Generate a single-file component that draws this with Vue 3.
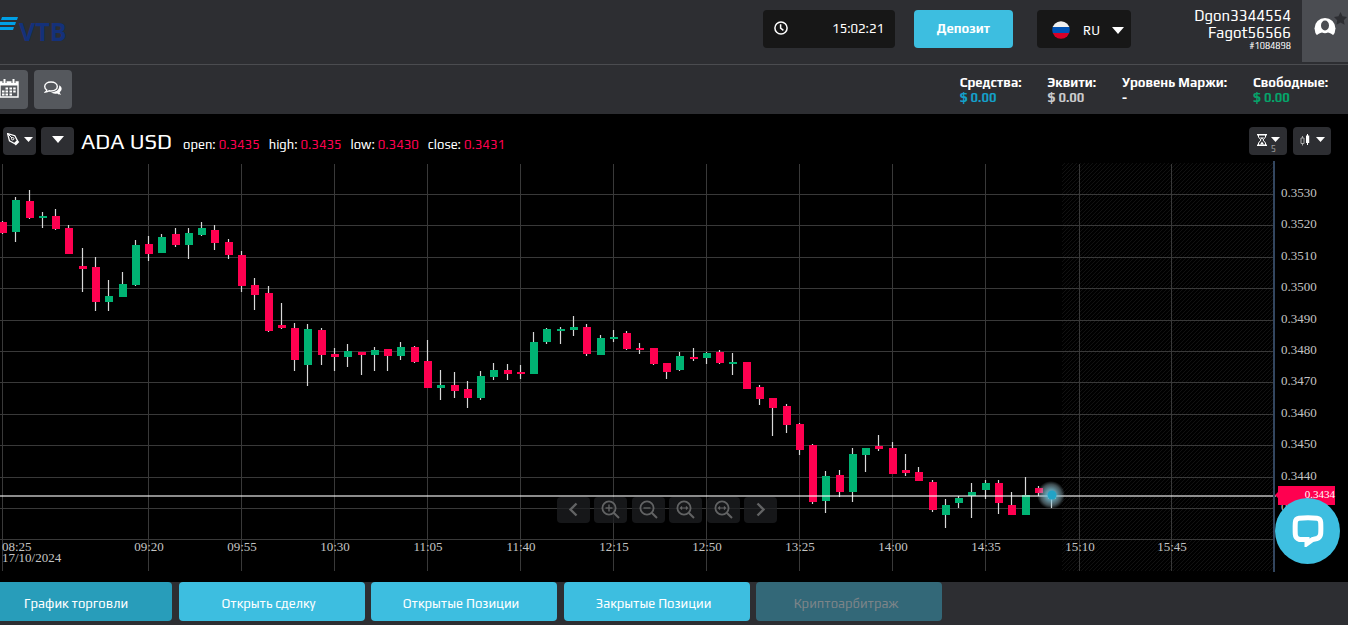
<script setup>
import { ref } from 'vue'

const language = ref('RU')

const stats = [
  { label: 'Средства:', value: '$ 0.00', tone: 'blue' },
  { label: 'Эквити:', value: '$ 0.00', tone: 'grey' },
  { label: 'Уровень Маржи:', value: '-', tone: 'white' },
  { label: 'Свободные:', value: '$ 0.00', tone: 'green' },
]

const quotes = [
  { label: 'open:', value: '0.3435' },
  { label: 'high:', value: '0.3435' },
  { label: 'low:', value: '0.3430' },
  { label: 'close:', value: '0.3431' },
]

const tabs = [
  { label: 'График торговли', active: true },
  { label: 'Открыть сделку' },
  { label: 'Открытые Позиции' },
  { label: 'Закрытые Позиции' },
  { label: 'Криптоарбитраж', disabled: true },
]

const zoomTools = ['prev', 'in', 'out', 'fit', 'reset', 'next']
const zoomLabels = {
  prev: 'Назад', in: 'Увеличить', out: 'Уменьшить', fit: 'По ширине', reset: 'Сбросить', next: 'Вперёд',
}

const times = [
  ['09:20', 149], ['09:55', 242], ['10:30', 335], ['11:05', 428], ['11:40', 521], ['12:15', 614],
  ['12:50', 707], ['13:25', 800], ['14:00', 893], ['14:35', 986], ['15:10', 1080], ['15:45', 1172],
]

const prices = [
  ['0.3530', 194], ['0.3520', 225], ['0.3510', 257], ['0.3500', 288], ['0.3490', 320], ['0.3480', 351],
  ['0.3470', 382], ['0.3460', 414], ['0.3450', 445], ['0.3440', 477], ['0.3430', 508],
]

// [rising, body top, body bottom, wick top, wick bottom], one entry per five minutes
const raw = [
  [0, 222, 233, 221, 234], [1, 200, 232, 197, 242], [0, 201, 218, 190, 219], [1, 216, 218, 212, 228],
  [0, 216, 229, 209, 230], [0, 228, 254, 225, 254], [0, 266, 269, 248, 292], [0, 267, 302, 257, 311],
  [1, 296, 302, 280, 311], [1, 284, 297, 272, 297], [1, 245, 285, 240, 286], [0, 244, 254, 236, 261],
  [1, 237, 253, 234, 253], [0, 234, 245, 228, 247], [1, 233, 245, 228, 259], [1, 228, 235, 222, 236],
  [0, 230, 243, 225, 250], [0, 242, 255, 239, 259], [0, 255, 286, 251, 292], [0, 285, 295, 278, 310],
  [0, 293, 331, 286, 332], [0, 325, 328, 303, 329], [0, 328, 360, 323, 371], [1, 329, 365, 324, 386],
  [0, 330, 355, 328, 365], [0, 354, 357, 348, 371], [1, 351, 357, 344, 367], [0, 352, 355, 352, 375],
  [1, 350, 355, 347, 371], [0, 349, 356, 349, 371], [1, 347, 356, 342, 360], [0, 347, 362, 346, 363],
  [0, 361, 388, 340, 388], [1, 385, 388, 370, 400], [0, 385, 391, 372, 398], [0, 389, 398, 381, 408],
  [1, 376, 398, 371, 400], [1, 370, 377, 363, 380], [0, 370, 374, 364, 380], [0, 372, 374, 365, 379],
  [1, 342, 374, 332, 374], [1, 329, 342, 328, 344], [1, 329, 331, 327, 344], [1, 327, 330, 316, 336],
  [0, 327, 354, 324, 356], [1, 338, 355, 335, 355], [1, 337, 339, 330, 342], [0, 333, 349, 331, 350],
  [0, 348, 350, 343, 354], [0, 348, 364, 348, 365], [0, 363, 372, 363, 379], [1, 356, 370, 352, 371],
  [0, 357, 359, 348, 361], [1, 353, 358, 352, 364], [0, 352, 363, 350, 364], [1, 362, 364, 353, 375],
  [0, 362, 389, 362, 389], [0, 387, 399, 385, 405], [0, 398, 408, 398, 436], [0, 406, 425, 404, 433],
  [0, 424, 450, 423, 455], [0, 445, 502, 444, 504], [1, 476, 501, 471, 513], [0, 475, 492, 470, 497],
  [1, 454, 492, 448, 502], [1, 448, 455, 448, 472], [0, 446, 449, 435, 451], [0, 448, 474, 442, 474],
  [0, 470, 473, 454, 476], [0, 472, 481, 467, 481], [0, 482, 510, 480, 512], [1, 505, 515, 499, 528],
  [1, 498, 503, 496, 508], [1, 492, 496, 483, 518], [1, 483, 490, 480, 499], [0, 483, 503, 480, 514],
  [0, 505, 515, 492, 515], [1, 495, 515, 477, 515], [0, 488, 493, 486, 496], [1, 493, 499, 491, 508],
]
const step = 13.28
const candles = raw.map(([up, top, bottom, high, low], i) => ({
  x: Math.round(3 + i * step), up: !!up, top, bottom, high, low,
}))
</script>

<template>
  <div class="page">
    <header class="topbar">
      <a class="logo" href="#" aria-label="VTB">
        <svg class="logo-mark" width="22" height="14" viewBox="0 0 22 14">
          <path d="M6 0h16l-1 3H5zM4 5h16l-1 3H3zM2 10h16l-1 3H1z" fill="#00a0e6" />
        </svg>
        <span class="logo-text">VTB</span>
      </a>
      <div class="clock">
        <svg width="14" height="14" viewBox="0 0 14 14" fill="none" stroke="#fff" stroke-width="1.5">
          <circle cx="7" cy="7" r="6.1" />
          <path d="M6.6 3.2v4l2.8 2.2" />
        </svg>
        <time>15:02:21</time>
      </div>
      <button class="deposit" type="button">Депозит</button>
      <label class="language">
        <svg width="18" height="18" viewBox="0 0 18 18">
          <clipPath id="flag"><circle cx="9" cy="9" r="8.8" /></clipPath>
          <g clip-path="url(#flag)">
            <path d="M0 0h18v6H0z" fill="#f0f0f0" />
            <path d="M0 6h18v6H0z" fill="#0052b4" />
            <path d="M0 12h18v6H0z" fill="#d80027" />
          </g>
        </svg>
        <select v-model="language" aria-label="Язык">
          <option>RU</option>
        </select>
        <svg width="12" height="7" viewBox="0 0 12 7"><path d="M0 0h12L6 7z" fill="#fff" /></svg>
      </label>
      <div class="user">
        <span>Dgon3344554</span>
        <span>Fagot56566</span>
        <small>#1084898</small>
      </div>
      <button class="avatar" type="button" aria-label="Профиль">
        <svg width="36" height="28" viewBox="0 0 36 28">
          <circle cx="13" cy="19.500" r="10.500" fill="#fff" />
          <ellipse cx="13" cy="16.500" rx="4" ry="5" fill="#4b4d52" />
          <path d="M4 30v-3c1.500-2 4-3 6-3.500q3 1.500 6 0c2 .5 4.500 1.500 6 3.500v3z" fill="#4b4d52" />
          <path d="M28.500 3l2 4.200 4.500.7-3.200 3.300.8 4.600-4.100-2.200-4.100 2.200.8-4.600L22 7.900l4.500-.7z" fill="#2d2e32" />
        </svg>
      </button>
    </header>

    <section class="toolbar">
      <button class="tool" type="button" aria-label="Календарь">
        <svg width="20" height="19" viewBox="0 0 20 19">
          <path d="M1 3h18v15H1z" fill="none" stroke="#fff" stroke-width="1.400" />
          <path d="M1 3h18v3.500H1z" fill="#fff" />
          <path d="M5.500 0v4M14.500 0v4" stroke="#55585d" stroke-width="4" />
          <path d="M5.500 0v4M14.500 0v4" stroke="#fff" stroke-width="2" />
          <path d="M6.500 8.500h2.500v2h-2.500zM10.500 8.500h2.500v2h-2.500zM14.200 8.500h2.500v2h-2.500zM3 11.500h2.500v2H3zM6.500 11.500h2.500v2h-2.500zM10.500 11.500h2.500v2h-2.500zM14.200 11.500h2.500v2h-2.500zM3 14.500h2.500v2H3zM6.500 14.500h2.500v2h-2.500zM10.500 14.500h2.500v2h-2.500z" fill="#fff" />
        </svg>
      </button>
      <button class="tool" type="button" aria-label="Чат">
        <svg width="18" height="15" viewBox="0 0 18 15">
          <path d="M15.200 4.200c2.800 1.600 3.500 4.600.5 7 0 1 .8 1.800 1.500 2.500-1.700.1-3-.4-4-1.200-2.600.5-4.900 0-6.200-1.200 5 0 8.700-2.500 8.200-7.100z" fill="#fff" />
          <path d="M7 1c3.600 0 6.300 1.900 6.300 4.500S10.600 10 7 10c-.7 0-1.300-.1-1.900-.2C4 10.600 2.800 11 1.500 11c.7-.6 1.200-1.200 1.300-2C1.300 8.100.7 6.900.7 5.500.7 2.900 3.400 1 7 1z" fill="#55585d" stroke="#fff" stroke-width="1.400" />
        </svg>
      </button>
      <dl class="stats">
        <div v-for="s in stats" :key="s.label">
          <dt>{{ s.label }}</dt>
          <dd :class="s.tone">{{ s.value }}</dd>
        </div>
      </dl>
    </section>

    <main class="chart">
      <div class="chart-head">
        <div class="chips">
          <button class="chip" type="button" aria-label="Рисование">
            <svg width="13" height="13" viewBox="0 0 13 13" fill="none" stroke="#fff">
              <path d="M.6.6l7.200 2.100 2.600 4.900-3 2.900-4.900-2.600z" stroke-width="1.300" />
              <path d="M.6.6l4.400 4.400" />
              <circle cx="5.700" cy="5.700" r="1.200" />
              <path d="M11.600 8.200l-3.500 3.500" stroke-width="2" />
            </svg>
            <svg width="9" height="5" viewBox="0 0 9 5"><path d="M0 0h9L4.500 5z" fill="#fff" /></svg>
          </button>
          <button class="chip" type="button" aria-label="Выбор инструмента">
            <svg width="12" height="7" viewBox="0 0 12 7"><path d="M0 0h12L6 7z" fill="#fff" /></svg>
          </button>
        </div>
        <h1>ADA USD</h1>
        <p class="quotes">
          <span v-for="q in quotes" :key="q.label">{{ q.label }} <b>{{ q.value }}</b></span>
        </p>
        <div class="chips right">
          <button class="chip" type="button" aria-label="Интервал">
            <svg width="10" height="12" viewBox="0 0 10 12" fill="none" stroke="#fff">
              <path d="M0 .7h10M0 11.300h10" stroke-width="1.400" />
              <path d="M1.500 1v2L4 6 1.500 9v2M8.500 1v2L6 6l2.500 3v2" />
              <path d="M3 3.500h4L5 5.500zM3 10.500L5 7.500l2 3z" fill="#fff" stroke="none" />
            </svg>
            <svg width="9" height="5" viewBox="0 0 9 5"><path d="M0 0h9L4.500 5z" fill="#fff" /></svg>
            <small>5</small>
          </button>
          <button class="chip types" type="button" aria-label="Тип графика">
            <svg width="10" height="12" viewBox="0 0 10 12">
              <path d="M2.500 2v2M2.500 9.500v2" stroke="#aaa" />
              <path d="M1 4h3v5.500H1z" fill="none" stroke="#aaa" />
              <path d="M7.500 0v11" stroke="#fff" />
              <path d="M6 1.500h3.200v7.500H6z" fill="#fff" />
            </svg>
            <svg width="9" height="5" viewBox="0 0 9 5"><path d="M0 0h9L4.500 5z" fill="#fff" /></svg>
          </button>
        </div>
      </div>

      <div class="plot">
        <svg class="plot-svg" viewBox="0 161 1348 411" role="img" aria-label="ADA USD">
          <defs>
            <pattern id="hatch" width="4" height="4" patternUnits="userSpaceOnUse">
              <path d="M-1 5L5-1M-1 1l2-2M3 5l2-2" stroke="#111" stroke-width="1" />
            </pattern>
            <radialGradient id="glow">
              <stop offset="0" stop-color="#5cc6e4" stop-opacity="1" />
              <stop offset=".4" stop-color="#7fc4d8" stop-opacity=".75" />
              <stop offset=".75" stop-color="#9fc4d0" stop-opacity=".4" />
              <stop offset="1" stop-color="#9fc4d0" stop-opacity="0" />
            </radialGradient>
          </defs>
          <rect x="1062" y="163" width="211" height="408" fill="url(#hatch)" />
          <g stroke="#393939">
            <line x1="2.500" x2="2.500" y1="164" y2="571" />
            <line v-for="[t, x] in times" :key="t" :x1="x - 0.5" :x2="x - 0.5" y1="164" y2="571" />
            <line v-for="[p, y] in prices" :key="p" x1="0" x2="1273" :y1="y + 0.5" :y2="y + 0.5" />
            <line x1="0" x2="1273" y1="539.5" y2="539.5" />
          </g>
          <g v-for="c in candles" :key="c.x" :fill="c.up ? '#00b373' : '#ff0050'">
            <line :x1="c.x - 0.5" :x2="c.x - 0.5" :y1="c.high" :y2="c.low" stroke="#d8d8d8" stroke-width="1.200" />
            <rect :x="c.x - 4" :y="c.top" width="8" :height="c.bottom - c.top" />
          </g>
          <rect x="0" y="495" width="1276" height="2" fill="#fff" fill-opacity=".55" />
          <circle cx="1051" cy="495" r="14" fill="url(#glow)" />
          <circle cx="1052" cy="495" r="4.500" fill="#22a3c6" />
          <rect x="1273" y="161" width="2" height="411" fill="#33465f" />
          <g class="axis">
            <text x="2" y="551">08:25</text>
            <text x="2" y="562">17/10/2024</text>
            <text v-for="[t, x] in times" :key="t" :x="x" y="551" text-anchor="middle">{{ t }}</text>
            <text v-for="[p, y] in prices" :key="p" x="1281" :y="y + 3">{{ p }}</text>
          </g>
          <path d="M1275 495l3-3v-6h57v19h-57v-7z" fill="#ff0050" />
          <text class="tag" x="1335" y="498" text-anchor="end">0.3434</text>
        </svg>

        <div class="zoom">
          <button v-for="z in zoomTools" :key="z" type="button" :aria-label="zoomLabels[z]">
            <svg width="19" height="19" viewBox="0 0 19 19" fill="none" stroke="#626364" stroke-width="1.800">
              <path v-if="z === 'prev'" d="M12.500 3.500l-6 6 6 6" stroke-width="2.400" />
              <path v-else-if="z === 'next'" d="M6.500 3.500l6 6-6 6" stroke-width="2.400" />
              <template v-else>
                <circle cx="8" cy="8" r="6.600" />
                <path d="M12.700 12.700L18 18" stroke-width="2" />
                <path v-if="z === 'in'" d="M8 4.500v7M4.500 8h7" stroke-width="1.400" />
                <path v-if="z === 'out'" d="M4.500 8h7" stroke-width="1.400" />
                <path v-if="z === 'fit' || z === 'reset'" d="M4.500 8h7M6 6.500L4.500 8 6 9.500M10 6.500L11.500 8 10 9.500" stroke-width="1.200" />
              </template>
            </svg>
          </button>
        </div>
      </div>
    </main>

    <nav class="tabs">
      <button v-for="t in tabs" :key="t.label" type="button" :class="{ active: t.active }" :disabled="t.disabled">
        {{ t.label }}
      </button>
    </nav>

    <button class="chat" type="button" aria-label="Открыть чат">
      <svg width="32" height="32" viewBox="0 0 32 32">
        <path d="M7 3.300Q16 2.200 25 3.300Q28.500 3.800 28.700 7.500Q29 13.500 28.700 18.500Q28.400 22.500 25 23.500L20.500 24.500L15 28.500V24.500H7.500Q3.500 23.500 3.300 19.500Q3 13.500 3.300 7.500Q3.500 3.800 7 3.300Z" fill="none" stroke="#fff" stroke-width="5" />
      </svg>
    </button>
  </div>
</template>

<style>
body {
  background: #2d2e32;
}
</style>

<style scoped>
.page {
  position: relative;
  min-height: 100vh;
  overflow: hidden;
  background: #2d2e32;
  color: #fff;
  font-family: Play, "Open Sans", "Noto Sans", sans-serif;
  font-size: 13px;
}
button,
select {
  border: 0;
  padding: 0;
  color: inherit;
  font: inherit;
}
svg {
  display: block;
  flex: none;
}
.topbar {
  display: flex;
  align-items: flex-start;
  height: 64px;
  border-bottom: 1px solid #4b4c50;
}
.logo {
  display: flex;
  align-items: flex-start;
  gap: 1px;
  margin: 17px auto 0 -4px;
  color: #14317a;
  text-decoration: none;
}
.logo-text {
  font: bold 25px/28px "Liberation Sans Narrow", "Open Sans", sans-serif;
}
.clock,
.language {
  display: flex;
  align-items: center;
  box-sizing: border-box;
  height: 38px;
  margin-top: 10px;
  border-radius: 4px;
  background: #171717;
}
.clock {
  justify-content: space-between;
  width: 132px;
  padding: 0 11px 2px;
}
.deposit {
  width: 99px;
  height: 38px;
  margin: 10px 24px 0 19px;
  padding-bottom: 2px;
  border-radius: 4px;
  background: #3dbee0;
  font-weight: 700;
}
.language {
  width: 94px;
  padding: 2px 7px 0 15px;
}
.language select {
  flex: 1;
  min-width: 0;
  margin-left: 13px;
  appearance: none;
  background: transparent;
}
.user {
  display: flex;
  flex-direction: column;
  align-items: flex-end;
  width: 160px;
  padding-top: 7px;
  font-size: 15px;
  line-height: 17px;
}
.user small {
  font-size: 9px;
  line-height: 11px;
}
.avatar {
  display: flex;
  width: 46px;
  height: 62px;
  margin-left: 11px;
  padding: 9px 0 0 10px;
  background: #4b4d52;
}
.toolbar {
  display: flex;
  align-items: flex-start;
  gap: 6px;
  height: 44px;
  padding-top: 5px;
}
.tool {
  display: flex;
  align-items: center;
  justify-content: center;
  width: 38px;
  height: 39px;
  padding-bottom: 2px;
  border-radius: 4px;
  background: #55585d;
}
.tool:first-child {
  margin-left: -10px;
}
.stats {
  display: flex;
  gap: 26px;
  margin: 5px 20px 0 auto;
  font-weight: 700;
  line-height: 15px;
}
.stats dd {
  margin: 0;
}
.blue { color: #149fc8; }
.grey { color: #c9cacc; }
.green { color: #05a36a; }
.chart {
  padding-bottom: 10px;
  background: #000;
}
.chart-head {
  display: flex;
  align-items: flex-start;
  height: 34px;
  padding: 13px 17px 0 3px;
}
.chips {
  display: flex;
  gap: 5px;
}
.chips.right {
  gap: 6px;
}
.chip {
  position: relative;
  display: flex;
  align-items: center;
  justify-content: center;
  gap: 4px;
  width: 33px;
  height: 28px;
  padding-bottom: 3px;
  border-radius: 4px;
  background: #2d2e32;
}
.right .chip {
  width: 38px;
}
.chip.types {
  gap: 6px;
}
.chip small {
  position: absolute;
  right: 11px;
  bottom: 1px;
  color: #999;
  font-size: 9px;
  line-height: 10px;
}
h1 {
  margin: 0 11px 0 7px;
  font-size: 22px;
  font-weight: 400;
  line-height: 29px;
  white-space: nowrap;
}
.quotes {
  display: flex;
  gap: 9px;
  margin: 8px auto 0 0;
  line-height: 20px;
}
.quotes b {
  color: #ff0050;
  font-weight: 400;
}
.plot {
  position: relative;
}
.plot-svg {
  width: 100%;
  height: auto;
}
.axis {
  fill: #c4c4c4;
  font: 13px "Liberation Serif", serif;
}
.tag {
  fill: #fff;
  font: 11px "Liberation Serif", serif;
}
.zoom {
  position: absolute;
  right: 14px;
  bottom: 49px;
  left: 0;
  display: flex;
  justify-content: space-between;
  width: 220px;
  margin: 0 auto;
}
.zoom button {
  display: flex;
  align-items: center;
  justify-content: center;
  width: 33px;
  height: 26px;
  padding: 0 0 2px;
  border-radius: 4px;
  background: rgba(30, 31, 34, 0.75);
}
.tabs {
  display: flex;
  justify-content: space-between;
  width: 956px;
  margin-left: -14px;
  padding-bottom: 4px;
}
.tabs button {
  width: 186px;
  height: 39px;
  padding: 4px 6px 0 0;
  border-radius: 4px;
  background: #3dbee0;
}
.tabs .active {
  background: #289dba;
}
.tabs button:disabled {
  background: #336878;
  color: #7c8488;
}
.chat {
  position: fixed;
  right: 8px;
  bottom: 61px;
  display: flex;
  align-items: center;
  justify-content: center;
  width: 65px;
  height: 66px;
  border-radius: 50%;
  background: #3dbee0;
}
</style>
